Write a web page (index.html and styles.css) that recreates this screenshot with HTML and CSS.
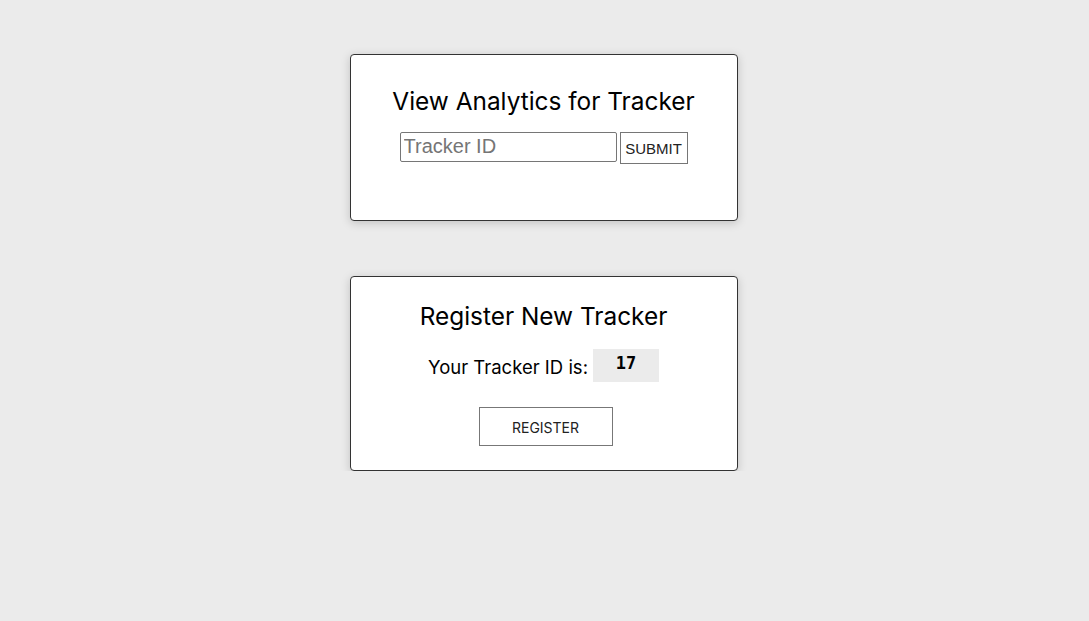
FILE: index.html
```html
<!DOCTYPE html>
<html>
<head>
<meta charset="utf-8">
<link rel="stylesheet" href="styles.css">
</head>
<body>
<main class="page">
  <section class="card card-view">
    <h2 class="card-title">View Analytics for Tracker</h2>
    <form class="view-form">
      <input class="tracker-input" type="text" placeholder="Tracker ID">
      <button class="submit-btn" type="button">SUBMIT</button>
    </form>
  </section>
  <section class="card card-register">
    <h2 class="card-title">Register New Tracker</h2>
    <div class="id-row">
      <span class="id-label">Your Tracker ID is:</span>
      <code class="id-code">17</code>
    </div>
    <button class="register-btn" type="button">REGISTER</button>
  </section>
</main>
</body>
</html>
```
FILE: styles.css
```css
html, body {
  margin: 0;
  padding: 0;
  background: #ebebeb;
}
body {
  font-family: Inter, "Liberation Sans", sans-serif;
  color: #000;
}
.page {
  display: flex;
  flex-direction: column;
  align-items: center;
  gap: 55px;
  padding-top: 54px;
  padding-right: 2px;
}
.card {
  box-sizing: border-box;
  width: 388px;
  background: #fff;
  border: 1px solid #333;
  border-radius: 4px;
  box-shadow: 0 2px 10px rgba(0,0,0,0.18);
  display: flex;
  flex-direction: column;
  align-items: center;
}
.card-view {
  height: 167px;
  padding-top: 30px;
}
.card-register {
  height: 195px;
  padding-top: 23px;
}
.card-title {
  margin: 0;
  font-size: 24.4px;
  font-weight: 400;
  line-height: 32px;
}
.view-form {
  display: flex;
  align-items: flex-start;
  gap: 3px;
  margin: 15px 0 0 0;
}
.tracker-input {
  box-sizing: border-box;
  width: 217px;
  height: 30px;
  border: 1px solid #767676;
  border-radius: 2px;
  padding: 0 3px 2px;
  font-family: "Liberation Sans", Arial, sans-serif;
  font-size: 20px;
  color: #000;
  outline: none;
}
.tracker-input::placeholder {
  color: #757575;
}
.submit-btn {
  box-sizing: border-box;
  width: 68px;
  height: 32px;
  background: #fff;
  border: 1px solid #767676;
  border-radius: 0;
  padding: 1px 0 0;
  font-family: "Liberation Sans", Arial, sans-serif;
  font-size: 15px;
  color: #222;
}
.id-row {
  display: flex;
  align-items: center;
  gap: 5px;
  margin-top: 17px;
}
.id-label {
  font-size: 18.5px;
  line-height: 24px;
  padding-top: 2px;
}
.id-code {
  box-sizing: border-box;
  width: 66px;
  height: 33px;
  background: #ebebeb;
  font-family: "DejaVu Sans Mono", "Liberation Mono", monospace;
  font-weight: bold;
  font-size: 17px;
  display: flex;
  justify-content: center;
  align-items: center;
  padding-bottom: 5px;
}
.register-btn {
  box-sizing: border-box;
  width: 134px;
  height: 39px;
  margin: 25px 0 0 4px;
  background: #fff;
  border: 1px solid #777;
  border-radius: 0;
  font-family: Inter, "Liberation Sans", sans-serif;
  font-size: 14px;
  color: #222;
  padding-top: 3px;
}
```
